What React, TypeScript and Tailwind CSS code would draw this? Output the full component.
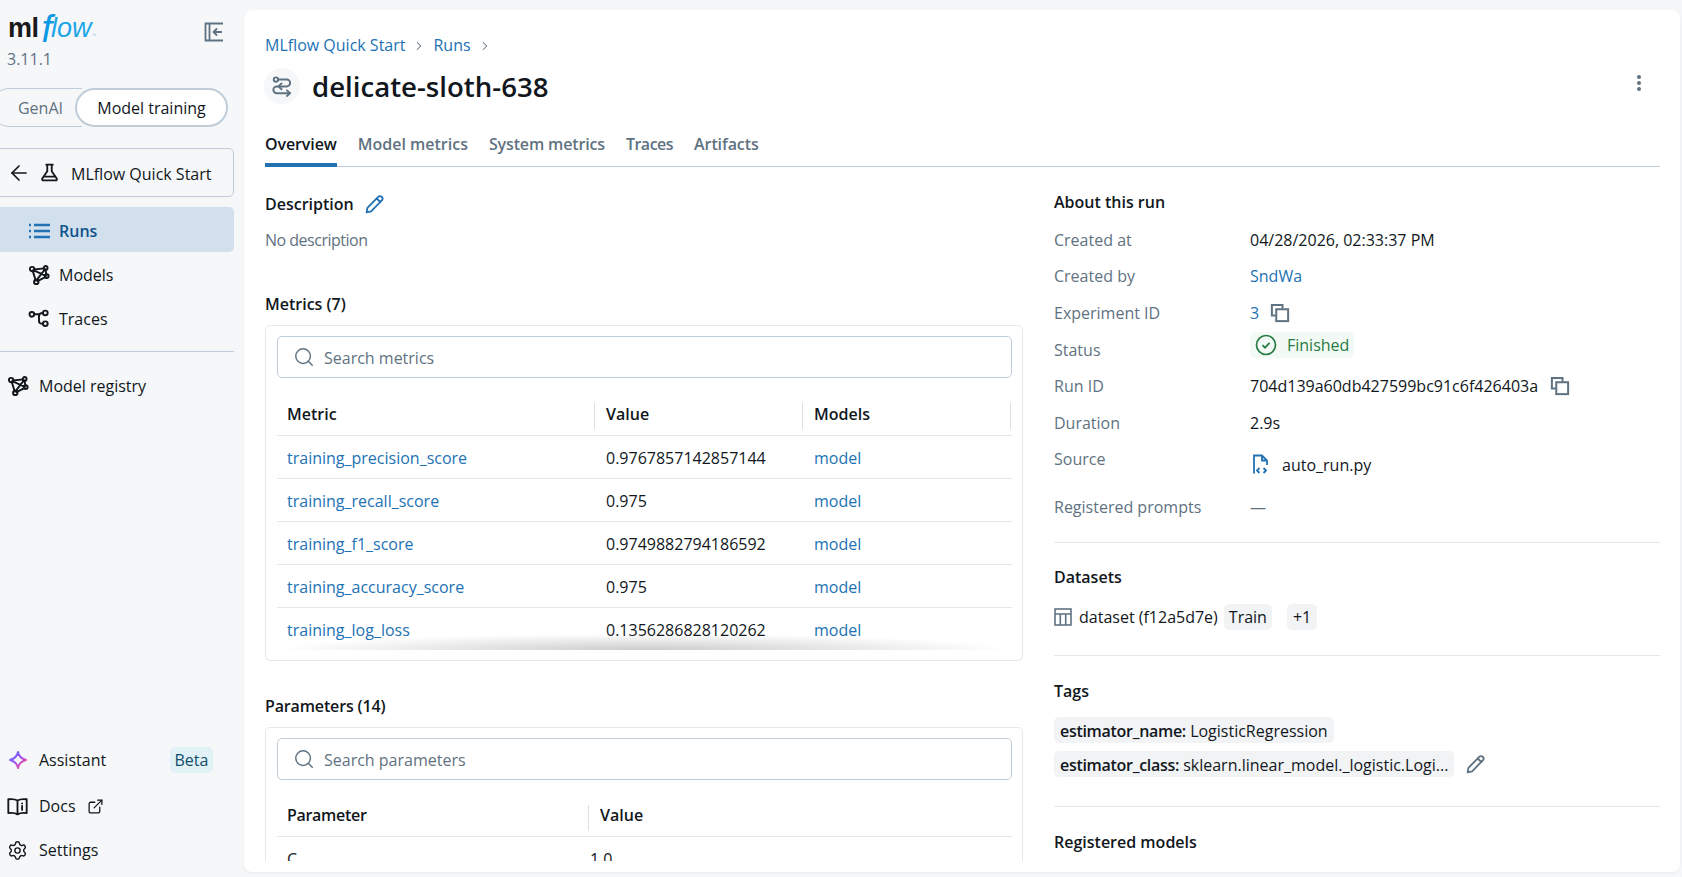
import type { ReactNode } from 'react';
import { ArrowLeft, ChevronRight, ExternalLink, Search, Settings } from 'lucide-react';

const METRICS = [
  { name: 'training_precision_score', value: '0.9767857142857144' },
  { name: 'training_recall_score', value: '0.975' },
  { name: 'training_f1_score', value: '0.9749882794186592' },
  { name: 'training_accuracy_score', value: '0.975' },
  { name: 'training_log_loss', value: '0.1356286828120262' },
];

function Icon({ size = 20, className = '', children }: { size?: number; className?: string; children: ReactNode }) {
  return (
    <svg
      width={size}
      height={size}
      viewBox="0 0 16 16"
      fill="none"
      stroke="currentColor"
      strokeWidth="1.4"
      strokeLinecap="round"
      strokeLinejoin="round"
      className={`shrink-0 ${className}`}
    >
      {children}
    </svg>
  );
}

function ModelsIcon({ className = '' }: { className?: string }) {
  return (
    <Icon size={22} className={className}>
      <path d="M4.2 4 L12 3.2 M3.4 4.8 L5.6 12 M3.8 4.4 L13 8.6 M12.6 3.9 L13.4 7.6 M12.2 4 L6.4 11.6 M6.9 12.4 L12.6 9.5" />
      <circle cx="3" cy="3.7" r="1.6" />
      <circle cx="12.8" cy="2.9" r="1.4" />
      <circle cx="13.6" cy="8.8" r="1.4" />
      <circle cx="6" cy="13" r="1.6" />
    </Icon>
  );
}

function TracesIcon() {
  return (
    <Icon size={22}>
      <circle cx="2.8" cy="4.6" r="1.7" />
      <circle cx="12.6" cy="3.6" r="1.7" />
      <circle cx="12.6" cy="11.4" r="1.7" />
      <path d="M4.5 4.6 H8 V9.6 Q8 11.4 10.9 11.4 M8 6 Q8 3.6 10.9 3.6" />
    </Icon>
  );
}

function RunIcon() {
  return (
    <Icon size={22}>
      <circle cx="3.6" cy="3.3" r="1.6" />
      <path d="M5.2 3.3 H11.4 A2.5 2.5 0 0 1 11.4 8.3 H4.2 A2.5 2.5 0 0 0 4.2 13.3 H13.6" />
      <path d="M7.6 6.2 L5.4 8.3 L7.6 10.4 M11.6 11.2 L13.8 13.3 L11.6 15.2" />
    </Icon>
  );
}

function PencilIcon({ size = 21, className = '' }: { size?: number; className?: string }) {
  return (
    <Icon size={size} className={className}>
      <path d="M2 14 L2.6 10.6 L10.8 2.2 A1.6 1.6 0 0 1 13.6 4.8 L5.4 13.2 Z M9.6 3.4 L12.5 6.1" />
    </Icon>
  );
}

function CopyIcon() {
  return (
    <svg width="20" height="20" viewBox="0 0 16 16" fill="none" stroke="#5f7281" strokeWidth="1.6" className="shrink-0">
      <path d="M10 4.5 V1.5 H1.5 V10 H4.5" />
      <rect x="5" y="5" width="9.5" height="9.5" />
    </svg>
  );
}

function SearchBox({ placeholder }: { placeholder: string }) {
  return (
    <div className="flex h-[42px] items-center gap-[9px] rounded-[5px] border border-[#c0cdd8] pl-[15px]">
      <Search size={22} strokeWidth={1.6} className="text-[#5f7281]" />
      <span className="pt-[2px] text-[#5f7281]">{placeholder}</span>
    </div>
  );
}

function SectionTitle({ children, className = '' }: { children: ReactNode; className?: string }) {
  return <div className={`h-6 font-semibold leading-6 ${className}`}>{children}</div>;
}

function HeaderCell({ children, className, sep = true }: { children: ReactNode; className: string; sep?: boolean }) {
  return (
    <div className={`relative flex h-full items-center font-semibold ${className}`}>
      {children}
      {sep && <span className="absolute top-[11px] right-0 h-[26px] w-px bg-[#d8dfe6]" />}
    </div>
  );
}

function InfoRow({ label, height, children }: { label: string; height: string; children: ReactNode }) {
  return (
    <div className={`flex items-center ${height}`}>
      <div className="w-[196px] text-[#5f7281]">{label}</div>
      <div className="flex items-center">{children}</div>
    </div>
  );
}

function NavItem({ icon, label, active }: { icon: ReactNode; label: string; active?: boolean }) {
  return (
    <div
      className={`flex w-[234px] items-center gap-[9px] rounded-r-[5px] pl-[28px] ${
        active ? 'mb-[1px] h-[45px] bg-[#d2dfec] pt-[2px] font-semibold text-[#0e538b]' : 'h-[44px]'
      }`}
    >
      {icon}
      {label}
    </div>
  );
}

function BottomItem({ icon, children }: { icon: ReactNode; children: ReactNode }) {
  return (
    <div className="flex h-[44px] items-center gap-[11px] pl-[7px]">
      {icon}
      {children}
    </div>
  );
}

export default function App() {
  return (
    <div className="flex h-[877px] w-[1682px] overflow-hidden bg-[#f6f7f9] font-['Open_Sans',sans-serif] text-[16px] text-[#11171c]">
      {/* Sidebar */}
      <aside className="flex w-[244px] shrink-0 flex-col pb-[5px]">
        <div className="flex h-[88px] shrink-0 justify-between pr-[20px] pl-[8px]">
          <div>
            <div className="flex h-[48px] items-baseline pt-[11px] font-['Liberation_Sans',sans-serif] leading-none">
              <span className="text-[27px] font-bold tracking-[-0.5px] text-[#1a1a1a]">ml</span>
              <span className="ml-[3px] inline-block translate-y-[5px] text-[38px] leading-[26px] font-light text-[#0d9ae4] italic">f</span>
              <span className="-ml-[1px] text-[27px] text-[#1ba6e8] italic">low</span>
              <span className="text-[5px] text-[#8ccbe8]">™</span>
            </div>
            <div className="-mt-[1px] -ml-[1px] text-[#5f7281]">3.11.1</div>
          </div>
          <svg width="20" height="20" viewBox="0 0 20 20" fill="none" stroke="#5f7281" strokeWidth="1.8" className="mt-[22px]">
            <path d="M19 1.5 H1.5 V18.5 H19 M5.5 1.5 V18.5" />
            <path d="M18 10 H10 M13 6.5 L9.5 10 L13 13.5" />
          </svg>
        </div>

        <div className="flex h-[39px] shrink-0">
          <div className="-ml-[10px] flex h-full w-[92px] items-center justify-end rounded-l-full border-y border-l border-[#c0cdd8] pr-[19px] text-[#5f7281]">
            GenAI
          </div>
          <div className="-ml-[7px] flex h-full w-[153px] items-center justify-center rounded-full border-2 border-[#c0cdd8] bg-white">
            Model training
          </div>
        </div>

        <div className="mt-[21px] -ml-[1px] flex h-[49px] w-[235px] shrink-0 items-center rounded-r-[5px] border border-[#c0cdd8] pl-[7px]">
          <ArrowLeft size={24} strokeWidth={1.7} />
          <Icon size={21} className="ml-[8px]">
            <path d="M5.5 2 H10.5 M6.3 2 V7 L2.5 12.5 Q2 14 3.5 14 H12.5 Q14 14 13.5 12.5 L9.7 7 V2 M3.4 11.2 H12.6" />
          </Icon>
          <span className="ml-[11px] pt-[2px]">MLflow Quick Start</span>
        </div>

        <div className="mt-[10px] shrink-0">
          <NavItem
            active
            label="Runs"
            icon={
              <svg width="22" height="16" viewBox="0 0 22 16" stroke="#2272b4" strokeWidth="2.4" className="shrink-0">
                <path d="M6 2 H22 M6 8 H22 M6 14 H22 M1 2 H3 M1 8 H3 M1 14 H3" />
              </svg>
            }
          />
          <NavItem label="Models" icon={<ModelsIcon />} />
          <NavItem label="Traces" icon={<TracesIcon />} />
        </div>

        <div className="mt-[10px] h-px w-[234px] shrink-0 bg-[#c0cdd8]" />

        <div className="mt-[12px] flex h-[44px] shrink-0 items-center gap-[10px] pl-[7px]">
          <ModelsIcon />
          Model registry
        </div>

        <div className="flex-1" />

        <div className="flex h-[44px] items-center gap-[11px] pb-[4px] pl-[8px]">
          <svg width="20" height="20" viewBox="0 0 20 20" fill="none" className="shrink-0">
            <defs>
              <linearGradient id="ai" x1="0" y1="0" x2="1" y2="1">
                <stop offset="0" stopColor="#4a6cf7" />
                <stop offset="0.5" stopColor="#a855f7" />
                <stop offset="1" stopColor="#ff4d6d" />
              </linearGradient>
            </defs>
            <path d="M10 2 Q11 8 18 10 Q11 12 10 18 Q9 12 2 10 Q9 8 10 2 Z" stroke="url(#ai)" strokeWidth="2" strokeLinejoin="round" />
          </svg>
          <span className="w-[120px]">Assistant</span>
          <span className="flex h-[26px] w-[43px] items-center justify-center rounded-[5px] bg-[#e2f1f5] text-[#104e6d]">Beta</span>
        </div>
        <BottomItem
          icon={
            <Icon size={21}>
              <path d="M8 3.5 C6 2.2 3.5 2.2 1 2.5 V13 C3.5 12.7 6 12.7 8 14 C10 12.7 12.5 12.7 15 13 V2.5 C12.5 2.2 10 2.2 8 3.5 Z M8 3.5 V14" />
              <path d="M11.5 5.6 V5.7 M11.5 7.6 V10.6" />
            </Icon>
          }
        >
          <span className="flex items-center gap-[11px]">
            Docs <ExternalLink size={17} strokeWidth={1.8} />
          </span>
        </BottomItem>
        <BottomItem icon={<Settings size={21} strokeWidth={1.6} />}>Settings</BottomItem>
      </aside>

      {/* Main panel */}
      <main className="mt-[10px] mr-[2px] flex h-[862px] flex-1 flex-col overflow-hidden rounded-lg bg-white pr-[20px] pl-[21px] shadow-[0_1px_3px_rgba(0,0,0,0.05)]">
        <div className="mt-[23px] flex h-6 items-center text-[#2272b4]">
          <span>MLflow Quick Start</span>
          <ChevronRight size={14} strokeWidth={1.8} className="mx-[7px] mt-[2px] text-[#5f7281]" />
          <span>Runs</span>
          <ChevronRight size={14} strokeWidth={1.8} className="mx-[7px] mt-[2px] text-[#5f7281]" />
        </div>
        <div className="mt-[11px] flex h-9 items-center">
          <div className="flex h-9 w-9 -translate-x-[1px] items-center justify-center rounded-full bg-[#f6f7f9] text-[#5f7281]">
            <RunIcon />
          </div>
          <h1 className="ml-[11px] text-[27.6px] font-semibold leading-9">delicate-sloth-638</h1>
          <div className="mr-[19px] ml-auto flex -translate-y-[3px] flex-col gap-[2px]">
            <span className="h-[4px] w-[4px] rounded-full bg-[#5f7281]" />
            <span className="h-[4px] w-[4px] rounded-full bg-[#5f7281]" />
            <span className="h-[4px] w-[4px] rounded-full bg-[#5f7281]" />
          </div>
        </div>

        <div className="mt-[20px] flex h-[43px] shrink-0 gap-[21px] border-b border-[#c0cdd8] font-semibold text-[#5f7281]">
          <div className="flex h-[43px] items-center border-b-[4px] border-[#2272b4] tracking-[-0.1px] text-[#11171c]">Overview</div>
          <div className="flex h-[43px] items-center pb-[4px]">Model metrics</div>
          <div className="flex h-[43px] items-center pb-[4px] tracking-[-0.15px]">System metrics</div>
          <div className="flex h-[43px] items-center pb-[4px] tracking-[-0.5px]">Traces</div>
          <div className="flex h-[43px] items-center pb-[4px] tracking-[-0.1px]">Artifacts</div>
        </div>

        <div className="flex h-[694px] shrink-0 gap-[31px] overflow-hidden">
          {/* Left column */}
          <div className="w-[758px] shrink-0">
            <div className="mt-[24px] flex h-[26px] items-center gap-[10px] font-semibold">
              Description
              <PencilIcon className="text-[#2272b4]" />
            </div>
            <div className="mt-[11px] h-6 leading-6 tracking-[-0.5px] text-[#5f7281]">No description</div>

            <SectionTitle className="mt-[40px]">Metrics (7)</SectionTitle>
            <div className="mt-[9px] h-[336px] rounded-[5px] border border-[#e3e8ed] pt-[10px] pr-[10px] pl-[11px]">
              <SearchBox placeholder="Search metrics" />
              <div className="relative mt-[14px] h-[258px] overflow-hidden">
                <div className="flex h-[44px] border-b border-[#e3e8ed]">
                  <HeaderCell className="w-[318px] pl-[10px]">Metric</HeaderCell>
                  <HeaderCell className="w-[208px] pl-[11px]">Value</HeaderCell>
                  <HeaderCell className="w-[208px] pl-[11px]">Models</HeaderCell>
                </div>
                {METRICS.map((m) => (
                  <div key={m.name} className="flex h-[43px] items-center border-b border-[#e3e8ed] pt-[2px]">
                    <div className="w-[318px] pl-[10px] text-[#2272b4]">{m.name}</div>
                    <div className="w-[208px] pl-[11px]">{m.value}</div>
                    <div className="pl-[11px] text-[#2272b4]">model</div>
                  </div>
                ))}
                <div className="absolute right-0 bottom-0 left-0 h-[16px] bg-[radial-gradient(ellipse_50%_100%_at_50%_100%,rgba(0,0,0,0.2),transparent)]" />
              </div>
            </div>

            <SectionTitle className="mt-[33px] tracking-[-0.15px]">Parameters (14)</SectionTitle>
            <div className="mt-[9px] h-[200px] rounded-[5px] border border-[#e3e8ed] pt-[10px] pr-[10px] pl-[11px]">
              <SearchBox placeholder="Search parameters" />
              <div className="mt-[14px] flex h-[43px] border-b border-[#e3e8ed]">
                <HeaderCell className="w-[312px] pl-[10px] tracking-[-0.3px]">Parameter</HeaderCell>
                <HeaderCell className="w-[300px] pl-[11px]" sep={false}>Value</HeaderCell>
              </div>
              <div className="flex h-[43px] items-center">
                <div className="w-[312px] pl-[10px]">C</div>
                <div className="pl-[1px]">1.0</div>
              </div>
            </div>
          </div>

          {/* Right column */}
          <div className="min-w-0 flex-1">
            <SectionTitle className="mt-[23px]">About this run</SectionTitle>
            <div className="mt-[7px]">
              <InfoRow label="Created at" height="h-[37px]">04/28/2026, 02:33:37 PM</InfoRow>
              <InfoRow label="Created by" height="h-[36px]">
                <span className="text-[#2272b4]">SndWa</span>
              </InfoRow>
              <InfoRow label="Experiment ID" height="h-[37px]">
                <span className="text-[#2272b4]">3</span>
                <span className="ml-[11px]"><CopyIcon /></span>
              </InfoRow>
              <div className="flex h-[37px]">
                <div className="flex h-[37px] w-[196px] items-center text-[#5f7281]">Status</div>
                <div className="mt-[1px] flex h-[26px] items-center gap-[10px] rounded-[5px] bg-[#f3faf5] pr-[5px] pl-[5px] text-[#277c43]">
                  <svg width="22" height="22" viewBox="0 0 22 22" fill="none" stroke="#277c43" strokeWidth="1.7">
                    <circle cx="11" cy="11" r="9.5" />
                    <path d="M7.5 11.2 L10 13.7 L14.6 8.8" />
                  </svg>
                  Finished
                </div>
              </div>
              <InfoRow label="Run ID" height="h-[36px]">
                704d139a60db427599bc91c6f426403a
                <span className="ml-[12px]"><CopyIcon /></span>
              </InfoRow>
              <InfoRow label="Duration" height="h-[37px]">2.9s</InfoRow>
              <div className="flex h-[47px]">
                <div className="mt-[6px] w-[196px] leading-6 text-[#5f7281]">Source</div>
                <div className="flex items-center gap-[12px]">
                  <svg width="18" height="21" viewBox="0 0 18 21" fill="none" stroke="#2272b4" strokeWidth="1.8" className="ml-[2px]">
                    <path d="M2 19.5 V1.5 H10 L15 6.5 V11 M10 1.5 V6.5 H15 M7.5 14 L5 16.5 L7.5 19 M11.5 14 L14 16.5 L11.5 19" />
                  </svg>
                  auto_run.py
                </div>
              </div>
              <InfoRow label="Registered prompts" height="h-[37px]">
                <span className="text-[#5f7281]">—</span>
              </InfoRow>
            </div>

            <div className="mt-[17px] h-px bg-[#e3e8ed]" />
            <SectionTitle className="mt-[22px]">Datasets</SectionTitle>
            <div className="mt-[15px] flex h-[26px] items-center">
              <svg width="18" height="18" viewBox="0 0 18 18" fill="none" stroke="#5f7281" strokeWidth="1.6" className="shrink-0">
                <rect x="1" y="1" width="16" height="16" />
                <path d="M1 6 H17 M6.3 6 V17 M11.7 6 V17" />
              </svg>
              <span className="ml-[7px]">dataset (f12a5d7e)</span>
              <span className="ml-[6px] flex h-[26px] items-center rounded-[5px] bg-[#f2f3f5] px-[5px]">Train</span>
              <span className="ml-[15px] flex h-[26px] items-center rounded-[5px] bg-[#f2f3f5] px-[6px]">+1</span>
            </div>

            <div className="mt-[25px] h-px bg-[#e3e8ed]" />
            <SectionTitle className="mt-[23px]">Tags</SectionTitle>
            <div className="mt-[14px] flex h-[26px]">
              <span className="flex items-center rounded-[5px] bg-[#f2f3f5] px-[6px] pt-[2px]">
                <b className="font-semibold tracking-[-0.3px]">estimator_name:</b>&nbsp;LogisticRegression
              </span>
            </div>
            <div className="mt-[8px] flex h-[26px] items-center">
              <span className="flex h-[26px] items-center rounded-[5px] bg-[#f2f3f5] px-[6px] pt-[2px]">
                <b className="font-semibold tracking-[-0.3px]">estimator_class:</b>&nbsp;sklearn.linear_model._logistic.Logi...
              </span>
              <PencilIcon className="ml-[11px] text-[#5f7281]" />
            </div>

            <div className="mt-[29px] h-px bg-[#e3e8ed]" />
            <SectionTitle className="mt-[23px]">Registered models</SectionTitle>
          </div>
        </div>
      </main>
    </div>
  );
}
